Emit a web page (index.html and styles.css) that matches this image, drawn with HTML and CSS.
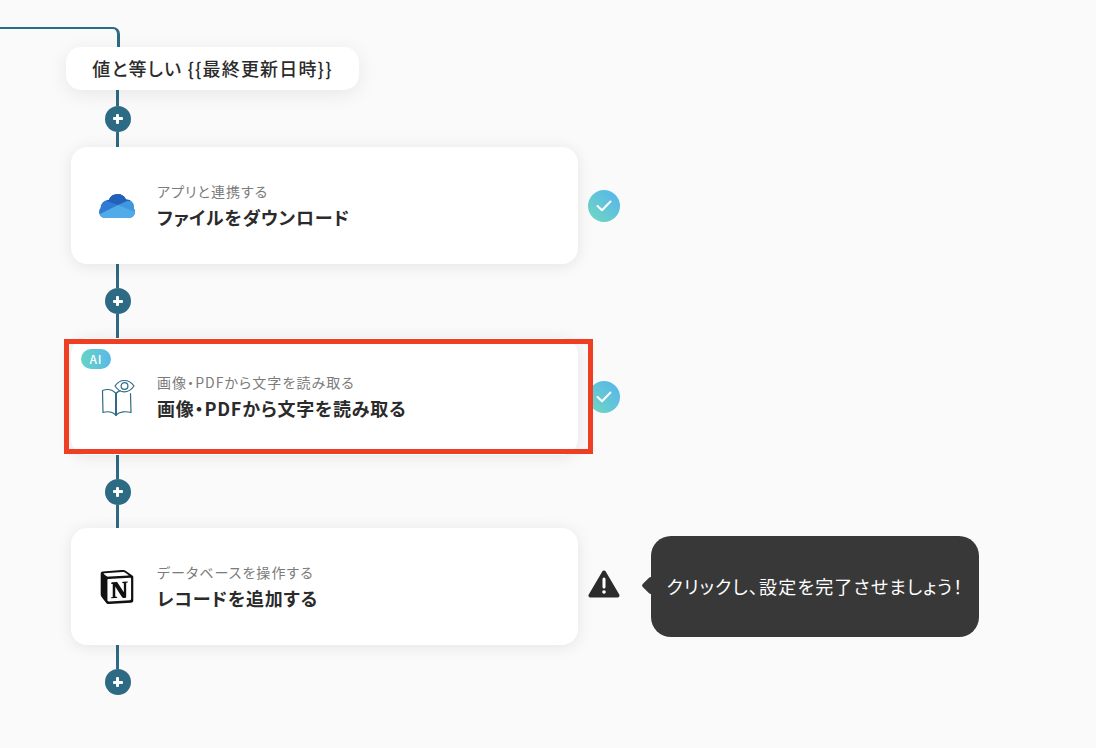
FILE: index.html
```html
<!DOCTYPE html>
<html lang="ja">
<head>
    <meta charset="UTF-8">
    <meta name="viewport" content="width=device-width, initial-scale=1.0">
    <title>フロー</title>
    <link rel="stylesheet" href="styles.css">
</head>
<body>
    <div class="branch"></div>
    <div class="condition">値と等しい {{最終更新日時}}</div>

    <div class="link link-pill">
        <span class="line"></span>
        <span class="add"></span>
        <span class="line"></span>
    </div>

    <div class="step">
        <div class="card">
            <div class="card-icon">
                <svg width="36" height="24" viewBox="0 0 36 24">
                    <clipPath id="cloud">
                        <rect x="0" y="12" width="36" height="12" rx="6"/>
                        <circle cx="18.500" cy="9.500" r="9.500"/>
                        <circle cx="9.500" cy="14" r="8"/>
                        <circle cx="27.500" cy="13" r="7.500"/>
                    </clipPath>
                    <g clip-path="url(#cloud)">
                        <rect width="36" height="24" fill="#2f7ad2"/>
                        <path fill="#2261b7" d="M6 0h26v8.500L19 11 8 7z"/>
                        <path fill="#3f97de" d="M19 11l9-4h8v13z"/>
                        <path fill="#52abe9" d="M19 11 0 20.500V24h36v-6z"/>
                    </g>
                </svg>
            </div>
            <div class="card-text">
                <div class="card-label">アプリと連携する</div>
                <div class="card-title">ファイルをダウンロード</div>
            </div>
        </div>
        <div class="status status-ok">
            <svg width="16" height="12" viewBox="0 0 16 12"><path d="M1.500 6l4.500 4.300L14.500 1.500" fill="none" stroke="#fff" stroke-width="2" stroke-linecap="round" stroke-linejoin="round"/></svg>
        </div>
    </div>

    <div class="link link-step">
        <span class="line"></span>
        <span class="add"></span>
        <span class="line"></span>
    </div>

    <div class="step">
        <div class="card">
            <span class="badge-ai">AI</span>
            <div class="card-icon">
                <svg width="36" height="38" viewBox="0 0 36 38" fill="none" stroke="#2f6b86" stroke-width="1.200" stroke-linejoin="round" stroke-linecap="round">
                    <path d="M17 15.500C14 12 9 10.500 3.500 12.500L4 34.500c5-1.500 9.500-.8 13 2.500"/>
                    <path d="M17 15.500c1.200-1.300 2.500-2.200 4-2.900M31.500 15.500l.500 19c-5-1.500-11.500-.8-15 2.500"/>
                    <path stroke-width="2" d="M17 15.500V37"/>
                    <path d="M16 8c2.500-3.700 5.800-5.500 9.200-5.500S32.500 4.300 35 8c-2.500 3.700-6.200 5.800-9.800 5.800S18.500 11.700 16 8z"/>
                    <circle cx="25.500" cy="8" r="3.400"/>
                </svg>
            </div>
            <div class="card-text">
                <div class="card-label">画像・PDFから文字を読み取る</div>
                <div class="card-title">画像・PDFから文字を読み取る</div>
            </div>
            <div class="highlight"></div>
        </div>
        <div class="status status-ok">
            <svg width="16" height="12" viewBox="0 0 16 12"><path d="M1.500 6l4.500 4.300L14.500 1.500" fill="none" stroke="#fff" stroke-width="2" stroke-linecap="round" stroke-linejoin="round"/></svg>
        </div>
    </div>

    <div class="link link-step-short">
        <span class="line"></span>
        <span class="add"></span>
        <span class="line"></span>
    </div>

    <div class="step">
        <div class="card">
            <div class="card-icon">
                <svg width="34" height="34" viewBox="0 0 24 24" fill="#111">
                    <path d="M4.459 4.208c.746.606 1.026.56 2.428.466l13.215-.793c.28 0 .047-.28-.046-.326L17.860 1.968c-.42-.326-.981-.7-2.055-.607L3.010 2.295c-.466.046-.56.28-.374.466zm.793 3.080v13.904c0 .747.373 1.027 1.214.98l14.523-.84c.841-.046.935-.56.935-1.167V6.354c0-.606-.233-.933-.748-.887l-15.177.887c-.56.047-.747.327-.747.933zm14.337.745c.093.42 0 .84-.42.888l-.7.14v10.264c-.608.327-1.168.514-1.635.514-.748 0-.935-.234-1.495-.933l-4.577-7.186v6.952L12.210 19s0 .84-1.168.84l-3.222.186c-.093-.186 0-.653.327-.746l.84-.233V9.854L7.822 9.760c-.094-.42.14-1.026.793-1.073l3.456-.233 4.764 7.279v-6.440l-1.215-.139c-.093-.514.28-.887.747-.933zM1.936 1.035l13.310-.98c1.634-.14 2.055-.047 3.082.7l4.249 2.986c.7.513.934.653.934 1.213v16.378c0 1.026-.373 1.634-1.680 1.726l-15.458.934c-.98.047-1.448-.093-1.962-.747l-3.129-4.060c-.56-.747-.793-1.306-.793-1.960V2.667c0-.839.374-1.540 1.447-1.632z"/>
                </svg>
            </div>
            <div class="card-text">
                <div class="card-label">データベースを操作する</div>
                <div class="card-title">レコードを追加する</div>
            </div>
        </div>
        <div class="status status-warn">
            <svg width="32" height="28" viewBox="0 0 32 28">
                <path fill="#2b2b2b" stroke="#2b2b2b" stroke-width="4" stroke-linejoin="round" d="M16 2.500 2.500 25.500h27z"/>
                <rect x="14.500" y="7.500" width="3" height="11" rx="1.500" fill="#fff"/>
                <circle cx="16" cy="22" r="1.800" fill="#fff"/>
            </svg>
        </div>
        <div class="tooltip">クリックし、設定を完了させましょう！</div>
    </div>

    <div class="link link-last">
        <span class="line"></span>
        <span class="add"></span>
    </div>
</body>
</html>
```

FILE: styles.css
```css
body {
    margin: 0;
    padding-top: 27px;
    background-color: #fafafa;
    color: #2b2b2b;
    font-family: "Noto Sans CJK JP", "Noto Sans", sans-serif;
    font-feature-settings: "palt";
    letter-spacing: 0.05em;
}

/* 上から入ってくる線 */
.branch {
    width: 117px;
    height: 18px;
    border-top: 2px solid #2d6a84;
    border-right: 3px solid #2d6a84;
    border-top-right-radius: 7px;
}

.condition {
    width: 293px;
    height: 43px;
    margin-left: 66px;
    background-color: #fff;
    border-radius: 15px;
    box-shadow: 0 4px 20px rgba(0, 0, 0, 0.08);
    font-size: 18px;
    font-weight: 500;
    letter-spacing: 0.065em;
    line-height: 43px;
    text-align: center;
    position: relative;
}

.link {
    display: flex;
    flex-direction: column;
    align-items: center;
    width: 25px;
    margin-left: 105px;
}

.link-pill { height: 57px; }
.link-step { height: 74px; }
.link-step-short { height: 73px; }
.link-last { height: 50px; }

.line {
    flex: 1;
    width: 3px;
    background-color: #2d6a84;
}

.add {
    flex: none;
    width: 26px;
    height: 26px;
    border-radius: 50%;
    background-color: #2d6a84;
    position: relative;
}

.add::before,
.add::after {
    content: "";
    position: absolute;
    background-color: #fff;
    border-radius: 1px;
}

.add::before {
    left: 8px;
    top: 11.500px;
    width: 10px;
    height: 3px;
}

.add::after {
    left: 11.500px;
    top: 8px;
    width: 3px;
    height: 10px;
}

.step {
    display: flex;
    align-items: center;
    height: 117px;
    margin-left: 71px;
}

.card {
    position: relative;
    display: flex;
    align-items: center;
    width: 507px;
    height: 117px;
    padding-left: 28px;
    box-sizing: border-box;
    background-color: #fff;
    border-radius: 16px;
    box-shadow: 0 2px 16px rgba(0, 0, 0, 0.09);
}

.card-icon {
    display: flex;
    justify-content: center;
    align-items: center;
    width: 36px;
    margin-right: 22px;
}

.card-label {
    font-size: 14px;
    letter-spacing: 0.075em;
    line-height: 20px;
    color: #7b7b7b;
}

.card-title {
    margin-top: 3px;
    font-size: 18px;
    font-weight: 700;
    line-height: 26px;
}

.badge-ai {
    position: absolute;
    left: 10px;
    top: 11px;
    width: 30px;
    height: 20px;
    border-radius: 10px;
    background: linear-gradient(to right, #66d4c4, #58b9e6);
    color: #fff;
    font-size: 12px;
    font-weight: 500;
    line-height: 20px;
    text-align: center;
}

/* 赤い注釈の枠 */
.highlight {
    position: absolute;
    left: -7px;
    top: 1px;
    width: 529px;
    height: 115px;
    box-sizing: border-box;
    border: 5px solid #ee3f24;
    z-index: 2;
}

.status {
    display: flex;
    justify-content: center;
    align-items: center;
    width: 32px;
    height: 32px;
    margin-left: 10px;
}

.status-ok {
    border-radius: 50%;
    background: linear-gradient(45deg, #72d9be, #54b3f0);
}

.status-warn svg {
    margin-top: -6px;
}

.tooltip {
    position: relative;
    width: 328px;
    height: 101px;
    margin-left: 31px;
    background-color: #383838;
    border-radius: 20px;
    color: #fff;
    font-size: 18px;
    letter-spacing: 0.065em;
    line-height: 101px;
    text-align: center;
}

.tooltip::before {
    content: "";
    position: absolute;
    left: -7px;
    top: 43px;
    width: 13px;
    height: 13px;
    background-color: #383838;
    border-radius: 2px;
    transform: rotate(45deg);
    z-index: -1;
}
```
